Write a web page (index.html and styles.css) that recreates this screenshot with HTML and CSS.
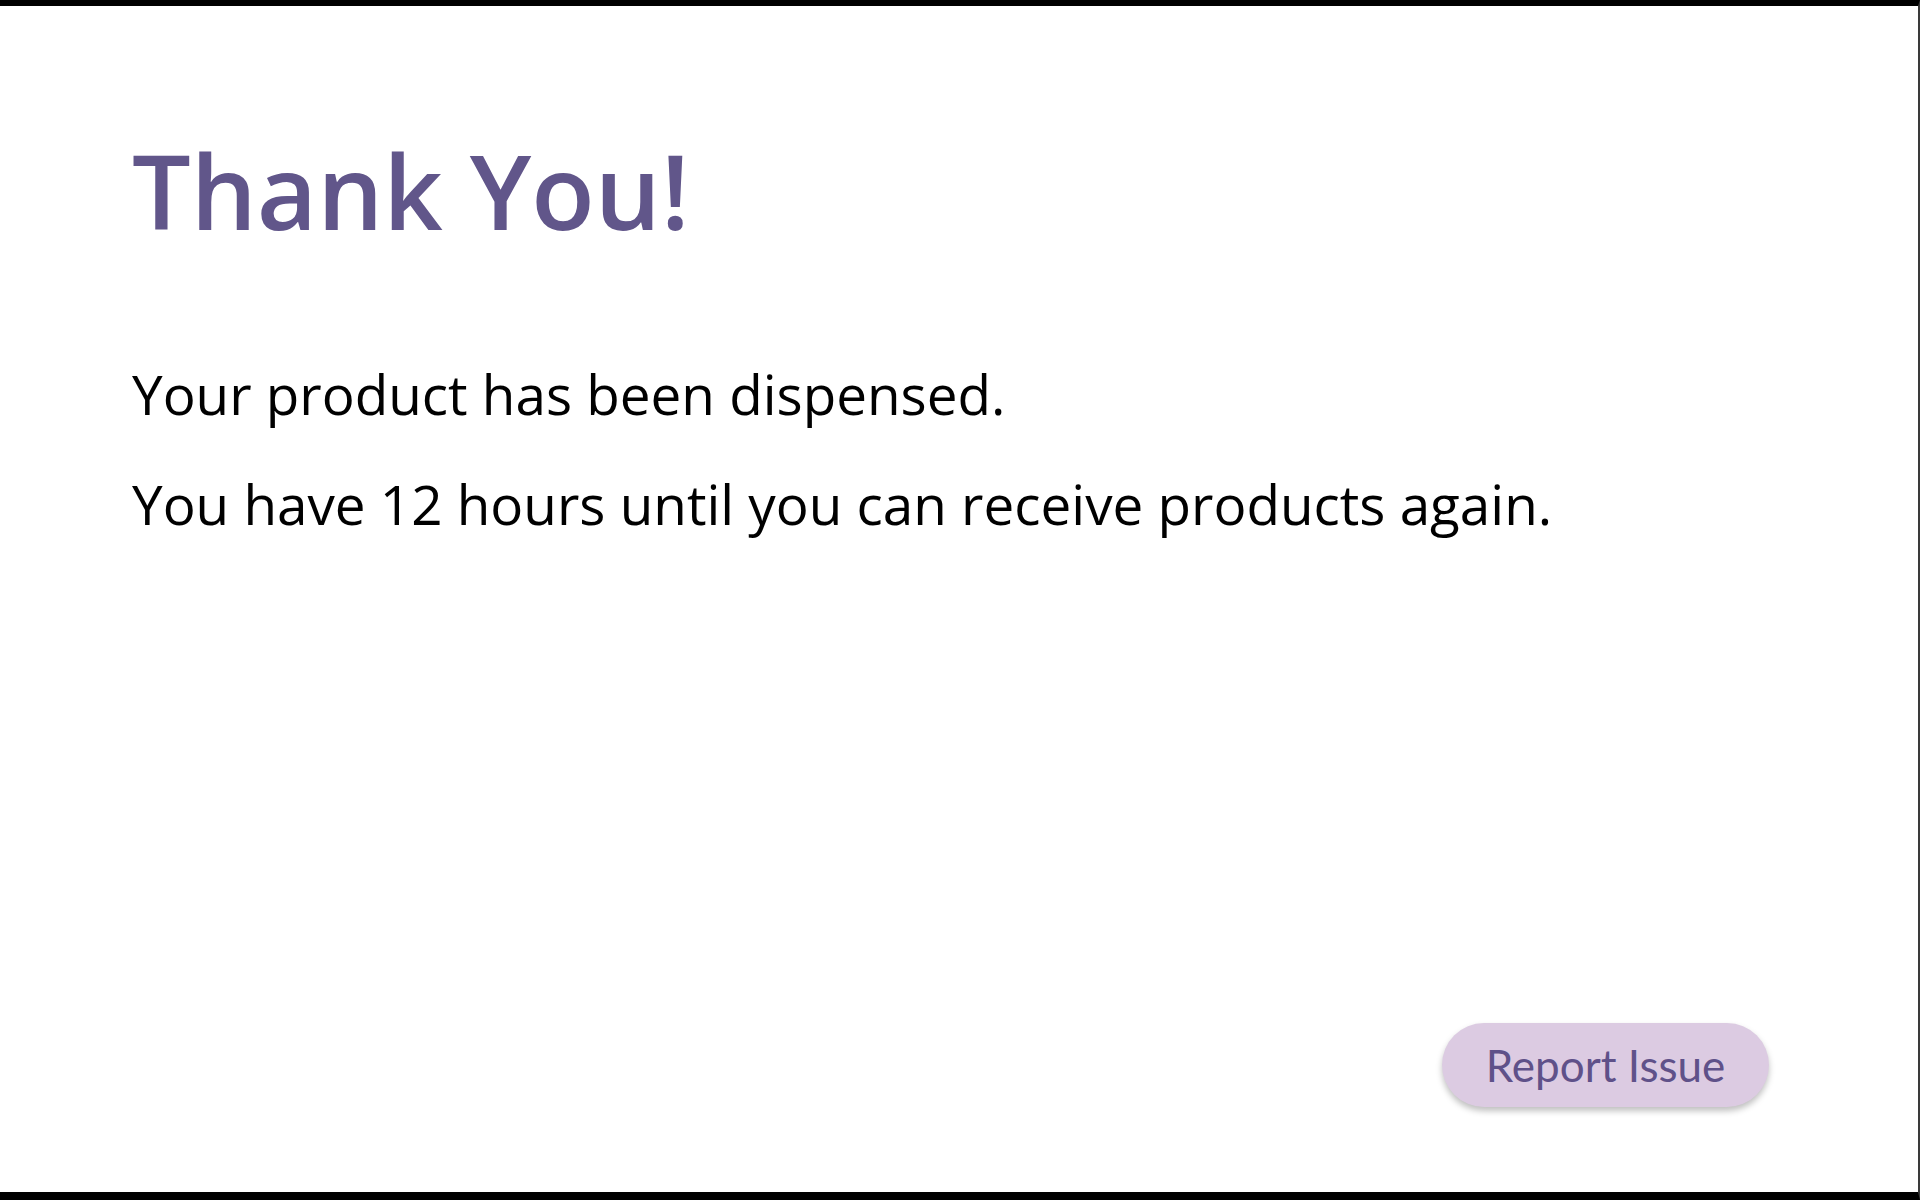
FILE: index.html
```html
<!DOCTYPE html>
<html>
	<head>
		<meta charset="UTF-8">
		<title>Thank You</title>
		<link rel="stylesheet" href="styles.css">
	</head>
	<body>
		<div id="screen">
			<div class="content">
				<h1 class="title">Thank You!</h1>
				<p class="msg">Your product has been dispensed.</p>
				<p class="msg">You have 12 hours until you can receive products again.</p>
			</div>
			<div class="actions">
				<button class="report_btn">Report Issue</button>
			</div>
		</div>
	</body>
</html>
```

FILE: styles.css
```css
*{
	margin: 0;
	padding: 0;
	box-sizing: border-box;
}
html, body{
	width: 1920px;
	height: 1200px;
	background: #000;
	overflow: hidden;
}
#screen{
	height: 1200px;
	border-top: 6px solid #000;
	border-bottom: 8px solid #000;
	border-right: 2px solid #3a3a3a;
	background: #fff;
	display: flex;
	flex-direction: column;
}
.content{
	flex: 1;
	padding: 119px 0 0 132px;
}
.title{
	font-family: "Open Sans", "Lato", sans-serif;
	font-weight: 600;
	font-size: 104px;
	line-height: 130px;
	color: #61568a;
}
.msg{
	font-family: "Open Sans", "Liberation Sans", sans-serif;
	font-size: 54.8px;
	line-height: 110px;
	color: #000;
}
.title + .msg{
	margin-top: 84px;
}
.actions{
	display: flex;
	justify-content: flex-end;
	padding: 0 149px 85px 0;
}
.report_btn{
	width: 327px;
	height: 84px;
	border: none;
	border-radius: 42px;
	background: #dccbe2;
	color: #5f5189;
	font-family: "Lato", "Open Sans", sans-serif;
	font-size: 44px;
	box-shadow: 0 4px 6px rgba(0,0,0,0.25);
}
```
